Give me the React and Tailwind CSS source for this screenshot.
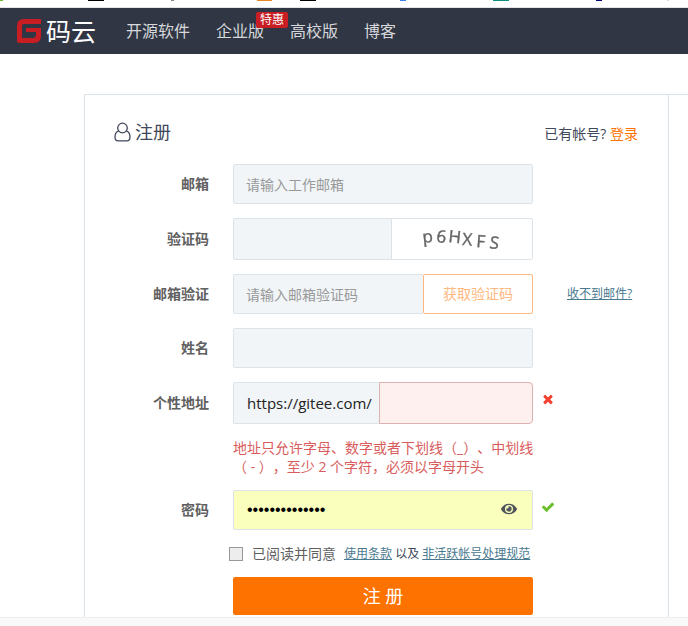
import { useState } from 'react';
import { FaEye } from 'react-icons/fa';

const LogoIcon = () => (
  <svg width="24" height="24" viewBox="0 0 24 24" fill="none" aria-hidden="true">
    <path
      d="M24 0V5H7Q5 5 5 7V19H15.5Q19 19 19 15.5V13H9V9H24V17Q24 24 17 24H2Q0 24 0 22V7Q0 0 7 0Z"
      fill="#c71d23"
    />
  </svg>
);

const UserIcon = () => (
  <svg width="17" height="20" viewBox="0 0 17 20" fill="none" stroke="#40485b" strokeWidth="1.3" aria-hidden="true">
    <circle cx="8.5" cy="6" r="4.8" />
    <path d="M4.6 9.2C2 9.8 1 12.2 1 15.2C1 17.4 2.3 18.8 4.2 18.8H12.8C14.7 18.8 16 17.4 16 15.2C16 12.2 15 9.8 12.4 9.2" />
  </svg>
);

const CrossIcon = () => (
  <svg width="14" height="14" viewBox="0 0 1792 1792" fill="#f4402f" role="img" aria-label="错误">
    <path d="M1490 1322q0 40-28 68l-136 136q-28 28-68 28t-68-28l-294-294-294 294q-28 28-68 28t-68-28l-136-136q-28-28-28-68t28-68l294-294-294-294q-28-28-28-68t28-68l136-136q28-28 68-28t68 28l294 294 294-294q28-28 68-28t68 28l136 136q28 28 28 68t-28 68l-294 294 294 294q28 28 28 68z" />
  </svg>
);

const CheckIcon = () => (
  <svg width="14" height="14" viewBox="0 0 1792 1792" fill="#6cbf2c" role="img" aria-label="正确">
    <path d="M1671 566q0 40-28 68l-724 724-136 136q-28 28-68 28t-68-28l-136-136-362-362q-28-28-28-68t28-68l136-136q28-28 68-28t68 28l294 295 656-657q28-28 68-28t68 28l136 136q28 28 28 68z" />
  </svg>
);

const Captcha = () => (
  <svg width="100" height="40" viewBox="0 0 100 40" className="overflow-visible blur-[0.5px]" fill="#666" stroke="#666" strokeWidth="0.4" role="img" aria-label="验证码图片">
    <g fontFamily="Open Sans" fontSize="17">
      <text x="11 24 36 50 64 77" y="24 23 23 26 28 29" rotate="-6 6 6 4 4 8">p6HXFS</text>
    </g>
  </svg>
);

// bottom edge of the browser's bookmark icons
const BookmarkEdge = () => (
  <svg width="688" height="1" viewBox="0 0 688 1" className="block" aria-hidden="true">
    <rect x="0" width="3" height="1" fill="#6cbf2c" />
    <rect x="88" width="16" height="1" fill="#000" />
    <rect x="171" width="3" height="1" fill="#888" />
    <rect x="257" width="15" height="1" fill="#ea8a1e" />
    <rect x="300" width="16" height="1" fill="#000" />
    <rect x="400" width="6" height="1" fill="#3b7ded" />
    <rect x="493" width="16" height="1" fill="#0a9080" />
    <rect x="596" width="6" height="1" fill="#000080" />
    <rect x="667" width="2" height="1" fill="#ddd" />
  </svg>
);

const Row = ({ id, label, children }) => (
  <div className="flex items-center">
    <label htmlFor={id} className="w-[95px] shrink-0 text-right text-sm font-bold text-[#606060]">{label}</label>
    <div className="ml-6 flex">{children}</div>
  </div>
);

const field = 'border border-[#dce3e8] bg-[#f1f5f8] px-3 text-sm text-[#222] outline-none placeholder:text-[#999]';

export default function App() {
  const [password, setPassword] = useState('gitee-password');
  const [visible, setVisible] = useState(false);

  return (
    <div className="min-h-screen overflow-hidden bg-white font-['Open_Sans','Noto_Sans_CJK_SC',sans-serif] text-[#40485b]">
      <div className="h-2 overflow-hidden border-b border-[#e2e2e8]">
        <BookmarkEdge />
      </div>

      <header className="flex h-[46px] items-center bg-[#303643] pl-[17px]">
        <a href="#home" className="flex items-center gap-[5px]">
          <LogoIcon />
          <span className="text-[25px] leading-6 text-white">码云</span>
        </a>
        <nav className="ml-[30px] flex gap-[26px] text-base leading-6 text-[#d6d8dc]">
          <a href="#explore">开源软件</a>
          <a href="#enterprise" className="relative">
            企业版
            <span className="absolute -top-[7px] left-10 rounded-xs bg-[#c71d23] px-1 text-xs leading-4 whitespace-nowrap text-white">特惠</span>
          </a>
          <a href="#education">高校版</a>
          <a href="#blog">博客</a>
        </nav>
      </header>

      <main className="mt-10 ml-[84px] flex border-t border-l border-[#dce3e8]">
        <section className="flex-1 px-[29px] pt-[23px] pb-0.5">
          <div className="mb-[18px] flex h-7 items-center justify-between">
            <h1 className="flex items-center gap-1 text-lg leading-7">
              <UserIcon />
              注册
            </h1>
            <p className="pt-1 pr-px text-sm">
              已有帐号? <a href="#login" className="text-[#fe7300]">登录</a>
            </p>
          </div>

          <form className="flex flex-col gap-3.5" onSubmit={(e) => e.preventDefault()}>
            <Row id="email" label="邮箱">
              <input id="email" type="email" placeholder="请输入工作邮箱" className={`${field} h-10 w-[300px] rounded-xs`} />
            </Row>

            <Row id="captcha" label="验证码">
              <input id="captcha" className={`${field} h-[42px] w-[158px] rounded-l-xs border-r-0`} />
              <button type="button" className="flex h-[42px] w-[142px] items-center justify-center rounded-r-xs border border-[#dce3e8] bg-white">
                <Captcha />
              </button>
            </Row>

            <Row id="code" label="邮箱验证">
              <input id="code" placeholder="请输入邮箱验证码" className={`${field} h-10 w-[190px] rounded-l-xs border-r-0`} />
              <button type="button" className="h-10 w-[110px] rounded-xs border border-[#ffb980] bg-white text-sm text-[#ffb980]">获取验证码</button>
              <a href="#help" className="ml-[34px] self-center text-xs whitespace-nowrap text-[#4a7a8f] underline">收不到邮件?</a>
            </Row>

            <Row id="name" label="姓名">
              <input id="name" className={`${field} h-10 w-[300px] rounded-xs`} />
            </Row>

            <Row id="path" label="个性地址">
              <span className="flex h-[42px] w-[146px] items-center rounded-l-xs border border-r-0 border-[#dce3e8] bg-[#f1f5f8] pl-[13px] text-[15px] text-[#222]">https://gitee.com/</span>
              <input id="path" aria-invalid="true" aria-describedby="path-error" className="h-[42px] w-[154px] rounded-r-sm border border-[#dbb1b1] bg-[#fff0f0] px-3 text-base outline-none" />
              <span className="mt-2.5 ml-2"><CrossIcon /></span>
            </Row>

            <p id="path-error" className="ml-[119px] text-sm leading-[19px] whitespace-nowrap text-[#d95c5c] [text-spacing-trim:space-all]">
              地址只允许字母、数字或者下划线（_）、中划线<br />
              （ - ），至少 2 个字符，必须以字母开头
            </p>

            <Row id="password" label="密码">
              <div className="relative">
                <input
                  id="password"
                  type={visible ? 'text' : 'password'}
                  value={password}
                  onChange={(e) => setPassword(e.target.value)}
                  className="h-10 w-[300px] rounded-xs border border-[#dce3e8] bg-[#faffbd] px-[13px] font-['Liberation_Sans',sans-serif] text-base text-black outline-none"
                />
                <button type="button" aria-label="显示密码" onClick={() => setVisible(!visible)} className="absolute top-[11px] right-4 text-[#50555c]">
                  <FaEye size={16} />
                </button>
              </div>
              <span className="mt-2.5 ml-2"><CheckIcon /></span>
            </Row>

            <div className="ml-[115px] flex h-[19px] items-center whitespace-nowrap">
              <input id="agree" type="checkbox" className="size-3.5 appearance-none border border-[#999] bg-[#ededed] checked:bg-[#fe7300]" />
              <label htmlFor="agree" className="ml-[9px] text-sm text-[#606060]">已阅读并同意</label>
              <p className="ml-2 text-xs">
                <a href="#terms" className="text-[#4a7a8f] underline">使用条款</a> 以及 <a href="#inactive" className="text-[#4a7a8f] underline">非活跃帐号处理规范</a>
              </p>
            </div>

            <button type="submit" className="ml-[119px] h-[38px] w-[300px] rounded-xs bg-[#fe7300] text-lg text-white">注 册</button>
          </form>
        </section>
        <aside className="w-5 border-l border-[#dce3e8]" />
      </main>

      <footer className="h-[9px] border-t border-[#eee] bg-[#f9f9f9]" />
    </div>
  );
}
